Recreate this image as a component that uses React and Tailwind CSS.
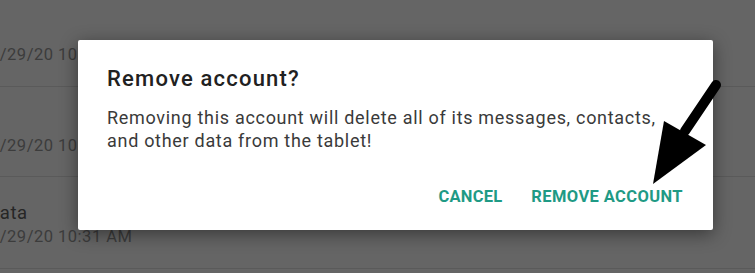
const rows = [
  { title: '', date: '1/29/20 10:31 AM', cls: 'h-[87px] pb-[21px]' },
  { title: '', date: '1/29/20 10:31 AM', cls: 'h-[90px] pb-[20px]' },
  { title: 'Data', date: '1/29/20 10:31 AM', cls: 'h-[92px] pb-[21px]' },
];

export default function App() {
  return (
    <div
      className="relative w-[755px] h-[273px] overflow-hidden bg-[#656565]"
      style={{ fontFamily: 'Roboto, "Liberation Sans", sans-serif' }}
    >
      {/* list behind the scrim */}
      <div className="flex flex-col">
        {rows.map((r, i) => (
          <div
            key={i}
            className={`${r.cls} border-b border-[#5a5a5a] flex flex-col justify-end -ml-[10px]`}
          >
            {r.title && <div className="text-[18.5px] leading-[22px] tracking-[0.6px] text-[#262626] -ml-[3px] mb-[3px]">{r.title}</div>}
            <div className="text-[16.5px] leading-[20px] tracking-[0.5px] text-[#3c3c3c]">{r.date}</div>
          </div>
        ))}
      </div>

      {/* dialog */}
      <div className="absolute left-[78px] top-[40px] w-[635px] h-[190px] bg-white rounded-[2px] shadow-[0_4px_18px_rgba(0,0,0,0.45)] flex flex-col pl-[29px] pr-[20px] pt-[26px]">
        <div className="text-[22px] leading-[26px] font-medium tracking-[1.2px] text-[#212121]">Remove account?</div>
        <div className="mt-[14px] text-[18px] leading-[23px] tracking-[0.7px] text-[#3a3a3a] whitespace-nowrap">
          Removing this account will delete all of its messages, contacts,
          <br />
          and other data from the tablet!
        </div>
        <div className="mt-auto mb-[20px] flex justify-end gap-[29px] pr-[10px]">
          <button className="text-[16.5px] font-bold text-[#1f9a85] tracking-[0.2px]">CANCEL</button>
          <button className="text-[16.5px] font-bold text-[#1f9a85] tracking-[0.4px]">REMOVE ACCOUNT</button>
        </div>
      </div>

      {/* annotation arrow */}
      <svg className="absolute left-0 top-0" width="755" height="273" viewBox="0 0 755 273">
        <line x1="716" y1="85" x2="685" y2="131" stroke="#000" strokeWidth="10" strokeLinecap="round" />
        <polygon points="664,121 706,145 653,184" fill="#000" />
      </svg>
    </div>
  );
}
